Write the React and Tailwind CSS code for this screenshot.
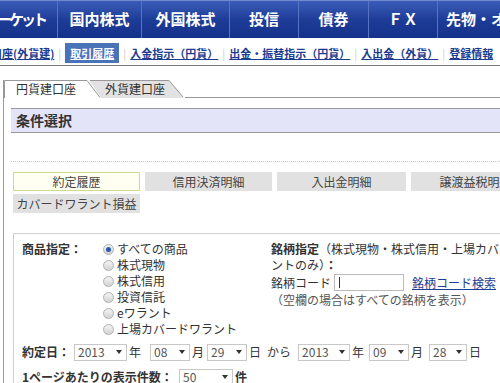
import React from 'react';

const font = { fontFamily: '"Noto Sans CJK JP", "Noto Sans", sans-serif' };

const navItems = [
  { label: 'マーケット', w: 'w-[84px] ml-[-27px] justify-center tracking-[-3px]' },
  { label: '国内株式', w: 'w-[84px] justify-center' },
  { label: '外国株式', w: 'w-[88px] justify-center' },
  { label: '投信', w: 'w-[69px] justify-center' },
  { label: '債券', w: 'w-[70px] justify-center' },
  { label: 'ＦＸ', w: 'w-[69px] justify-center' },
  { label: '先物・オプション', w: 'w-[140px] justify-start pl-[8px]' },
];

function Select({ value, w }) {
  return (
    <div className={`inline-flex items-center justify-between h-[17px] border border-[#c8c8c8] bg-white pl-[3px] pr-[4px] text-[12px] text-[#555] ${w}`}>
      <span className="leading-none">{value}</span>
      <span className="w-0 h-0 border-l-[3.5px] border-r-[3.5px] border-t-[4px] border-l-transparent border-r-transparent border-t-[#333]" />
    </div>
  );
}

function Radio({ checked, label }) {
  return (
    <div className="flex items-center h-[16px]">
      <span className="w-[11px] h-[11px] rounded-full border border-[#b0b0b0] bg-gradient-to-b from-[#f4f4f4] to-[#d4d4d4] flex items-center justify-center">
        {checked && <span className="w-[5px] h-[5px] rounded-full bg-[#2a57b5]" />}
      </span>
      <span className="ml-[3px] text-[12px] text-[#333] leading-none whitespace-nowrap">{label}</span>
    </div>
  );
}

function Tab({ label, active }) {
  return (
    <div className={`relative h-[18px] flex items-center ${active ? 'w-[97px] z-10' : 'w-[96px] ml-[-12px]'}`}>
      <svg className="absolute inset-0" width={active ? 97 : 96} height="18" viewBox={active ? '0 0 97 18' : '0 0 96 18'}>
        {active ? (
          <>
            <polygon points="0,0 83,0 97,18 0,18" fill="#fff" />
            <polyline points="0.5,18 0.5,0.5 83,0.5 96,17.5" fill="none" stroke="#999" />
          </>
        ) : (
          <>
            <polygon points="0,0 80,0 95,18 12,18" fill="#e2e2e2" />
            <polyline points="1,0.5 80,0.5 94,17" fill="none" stroke="#999" />
          </>
        )}
      </svg>
      <span className={`relative text-[12px] text-[#333] leading-none ${active ? 'ml-[12px]' : 'ml-[16px]'}`}>{label}</span>
    </div>
  );
}

function Sep() {
  return <span className="mx-[4px] text-[#ccc] font-normal">|</span>;
}

export default function App() {
  return (
    <div className="w-[500px] h-[383px] overflow-hidden bg-white" style={font}>
      <div className="w-[560px]">
        <nav className="flex h-[38px] bg-gradient-to-b from-[#3a5cb8] via-[#1e3d98] to-[#14318a] border-t border-[#6f8ad0]">
          {navItems.map((item, i) => (
            <div
              key={item.label}
              className={`${item.w} shrink-0 flex items-center whitespace-nowrap text-[15px] font-bold text-white ${i > 0 ? 'border-l border-[#5673c4]' : ''}`}
            >
              {item.label}
            </div>
          ))}
        </nav>

        <div className="flex items-center h-[28px] pt-[3px] border-b border-[#777] text-[11px] font-bold text-[#1d3c8f] whitespace-nowrap">
          <span className="underline ml-[-9px] shrink-0">口座(外貨建)</span>
          <Sep />
          <span className="bg-[#4a73b8] text-white underline px-[5px] py-[2px]">取引履歴</span>
          <Sep />
          <span className="underline">入金指示（円貨）</span>
          <Sep />
          <span className="underline">出金・振替指示（円貨）</span>
          <Sep />
          <span className="underline">入出金（外貨）</span>
          <Sep />
          <span className="underline">登録情報</span>
        </div>

        <div className="ml-[3px] mt-[14px] border-l border-[#999]">
          <div className="flex items-end h-[18px]">
            <Tab label="円貨建口座" active />
            <Tab label="外貨建口座" />
            <div className="flex-1 border-b border-[#999]" />
          </div>

          <div className="pl-[7px]">
            <div className="mt-[10px] h-[25px] flex items-center bg-[#e4e4f8] border-t border-b border-[#9a9a9a] pl-[5px] text-[14px] font-bold text-[#333]">
              条件選択
            </div>

            <div className="mt-[28px] border-t border-dotted border-[#c8c8c8]" />

            <div className="ml-[2px] mt-[10px] flex flex-col gap-[3px] text-[12px] text-[#444]">
              <div className="flex gap-[5px]">
                <div className="w-[127px] h-[19px] flex items-center justify-center bg-[#fffff2] border border-[#cbdc8a]">約定履歴</div>
                <div className="w-[127px] h-[19px] flex items-center justify-center bg-[#e1e1e1]">信用決済明細</div>
                <div className="w-[129px] h-[19px] flex items-center justify-center bg-[#e1e1e1]">入出金明細</div>
                <div className="w-[129px] h-[19px] flex items-center justify-center bg-[#e1e1e1]">譲渡益税明細</div>
              </div>
              <div className="flex">
                <div className="w-[127px] h-[19px] flex items-center justify-center bg-[#e1e1e1]">カバードワラント損益</div>
              </div>
            </div>

            <div className="ml-[2px] mt-[20px] border-t border-l border-[#cfcfcf] pl-[8px] pt-[7px] text-[12px] text-[#333]">
              <div className="flex">
                <div className="w-[81px] font-bold leading-[16px]">商品指定：</div>
                <div className="w-[168px] flex flex-col">
                  <Radio checked label="すべての商品" />
                  <Radio label="株式現物" />
                  <Radio label="株式信用" />
                  <Radio label="投資信託" />
                  <Radio label="eワラント" />
                  <Radio label="上場カバードワラント" />
                </div>
                <div className="w-[278px] leading-[16px]">
                  <div>
                    <span className="font-bold">銘柄指定</span>（株式現物・株式信用・上場カバードワラントのみ）<span className="font-bold">：</span>
                  </div>
                  <div className="flex items-center mt-[1px]">
                    <span>銘柄コード</span>
                    <div className="ml-[3px] w-[70px] h-[17px] border border-[#bbb] flex items-center pl-[4px]">
                      <span className="w-px h-[11px] bg-[#333]" />
                    </div>
                    <span className="ml-[8px] text-[#1d3c8f] underline">銘柄コード検索</span>
                  </div>
                  <div className="text-[#555] mt-[1px]">（空欄の場合はすべての銘柄を表示）</div>
                </div>
              </div>

              <div className="flex items-center mt-[6px] whitespace-nowrap">
                <span className="font-bold w-[52px]">約定日：</span>
                <Select value="2013" w="w-[53px]" />
                <span className="ml-[2px] mr-[9px]">年</span>
                <Select value="08" w="w-[40px]" />
                <span className="ml-[2px] mr-[3px]">月</span>
                <Select value="29" w="w-[40px]" />
                <span className="ml-[2px]">日</span>
                <span className="ml-[6px] mr-[7px]">から</span>
                <Select value="2013" w="w-[52px]" />
                <span className="ml-[2px] mr-[5px]">年</span>
                <Select value="09" w="w-[40px]" />
                <span className="ml-[2px] mr-[6px]">月</span>
                <Select value="28" w="w-[38px]" />
                <span className="ml-[2px]">日</span>
              </div>

              <div className="flex items-center mt-[7px] whitespace-nowrap">
                <span className="font-bold w-[157px]">1ページあたりの表示件数：</span>
                <Select value="50" w="w-[54px]" />
                <span className="ml-[2px] font-bold">件</span>
              </div>
            </div>
          </div>
        </div>
      </div>
    </div>
  );
}
